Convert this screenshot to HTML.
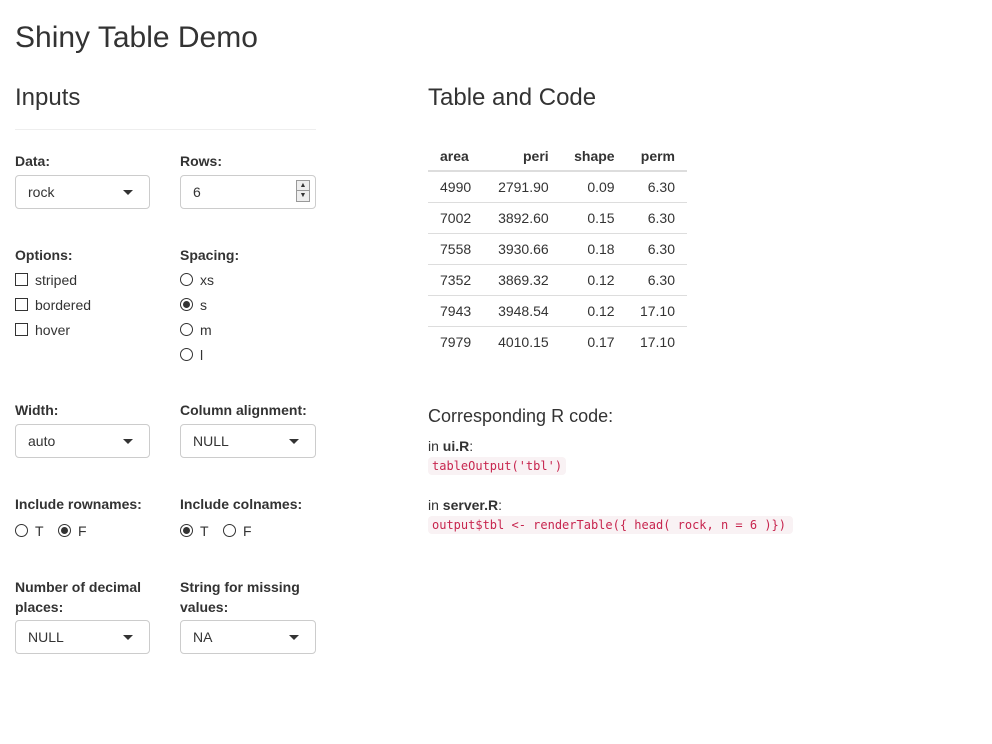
<!DOCTYPE html>
<html><head><meta charset="utf-8"><style>
*{box-sizing:border-box}
body{margin:0;width:992px;height:744px;background:#fff;font-family:"Liberation Sans",Arial,sans-serif;font-size:14px;color:#333;position:relative;overflow:hidden}
.a{position:absolute;white-space:nowrap}
h1{position:absolute;margin:0;font-weight:normal;font-size:30px;left:15px;top:21px}
h3{position:absolute;margin:0;font-weight:normal;font-size:24px}
b,.lb{font-weight:bold}
.sel{position:absolute;width:135px;height:34px;border:1px solid #ccc;border-radius:4px;padding:8px 12px;font-size:14px}
.sel:after{content:"";position:absolute;right:16px;top:14px;border-left:5px solid transparent;border-right:5px solid transparent;border-top:5px solid #333}
.cb{position:absolute;width:13px;height:13px;border:1px solid #333;background:#fff}
.rd{position:absolute;width:13px;height:13px;border:1px solid #333;border-radius:50%}
.rd.on:after{content:"";position:absolute;left:2px;top:2px;width:7px;height:7px;border-radius:50%;background:#333}
table{position:absolute;left:428px;top:140px;border-collapse:collapse;font-size:14px;width:259px}
th{text-align:right;padding:8px 12px 6px 12px;border-bottom:2px solid #ddd;font-weight:bold}
td{text-align:right;padding:7px 12px 7px 12px;border-top:1px solid #ddd;height:31px}
th:first-child,td:first-child{text-align:left}
tr:first-child td{border-top:none}
code{position:absolute;font-family:"DejaVu Sans Mono","Liberation Mono",monospace;font-size:12px;color:#c7254e;background:#f9f2f4;border-radius:4px;padding:2px 4px}
</style></head><body>
<h1>Shiny Table Demo</h1>
<h3 style="left:15px;top:84px">Inputs</h3>
<div class="a" style="left:15px;top:129px;width:301px;border-top:1px solid #eee"></div>

<div class="a lb" style="left:15px;top:153px">Data:</div>
<div class="sel" style="left:15px;top:175px">rock</div>
<div class="a lb" style="left:180px;top:153px">Rows:</div>
<div class="a" style="left:180px;top:175px;width:136px;height:34px;border:1px solid #ccc;border-radius:4px;padding:8px 12px">6</div>
<div class="a" style="left:296px;top:180px;width:14px;height:22px;border:1px solid #999;background:#eee"><div style="border-bottom:1px solid #999;height:10px;font-size:7px;line-height:10px;text-align:center">▲</div><div style="font-size:7px;line-height:10px;text-align:center">▼</div></div>

<div class="a lb" style="left:15px;top:247px">Options:</div>
<div class="cb" style="left:15px;top:273px"></div><div class="a" style="left:35px;top:272px">striped</div>
<div class="cb" style="left:15px;top:298px"></div><div class="a" style="left:35px;top:297px">bordered</div>
<div class="cb" style="left:15px;top:323px"></div><div class="a" style="left:35px;top:322px">hover</div>

<div class="a lb" style="left:180px;top:247px">Spacing:</div>
<div class="rd" style="left:180px;top:273px"></div><div class="a" style="left:200px;top:272px">xs</div>
<div class="rd on" style="left:180px;top:298px"></div><div class="a" style="left:200px;top:297px">s</div>
<div class="rd" style="left:180px;top:323px"></div><div class="a" style="left:200px;top:322px">m</div>
<div class="rd" style="left:180px;top:348px"></div><div class="a" style="left:200px;top:347px">l</div>

<div class="a lb" style="left:15px;top:402px">Width:</div>
<div class="sel" style="left:15px;top:424px">auto</div>
<div class="a lb" style="left:180px;top:402px">Column alignment:</div>
<div class="sel" style="left:180px;top:424px;width:136px">NULL</div>

<div class="a lb" style="left:15px;top:496px">Include rownames:</div>
<div class="rd" style="left:15px;top:524px"></div><div class="a" style="left:35px;top:523px">T</div>
<div class="rd on" style="left:58px;top:524px"></div><div class="a" style="left:78px;top:523px">F</div>
<div class="a lb" style="left:180px;top:496px">Include colnames:</div>
<div class="rd on" style="left:180px;top:524px"></div><div class="a" style="left:200px;top:523px">T</div>
<div class="rd" style="left:223px;top:524px"></div><div class="a" style="left:243px;top:523px">F</div>

<div class="a lb" style="left:15px;top:577px;line-height:20px">Number of decimal<br>places:</div>
<div class="sel" style="left:15px;top:620px">NULL</div>
<div class="a lb" style="left:180px;top:577px;line-height:20px">String for missing<br>values:</div>
<div class="sel" style="left:180px;top:620px;width:136px">NA</div>

<h3 style="left:428px;top:84px">Table and Code</h3>
<table>
<tr><th>area</th><th>peri</th><th>shape</th><th>perm</th></tr>
<tr><td>4990</td><td>2791.90</td><td>0.09</td><td>6.30</td></tr>
<tr><td>7002</td><td>3892.60</td><td>0.15</td><td>6.30</td></tr>
<tr><td>7558</td><td>3930.66</td><td>0.18</td><td>6.30</td></tr>
<tr><td>7352</td><td>3869.32</td><td>0.12</td><td>6.30</td></tr>
<tr><td>7943</td><td>3948.54</td><td>0.12</td><td>17.10</td></tr>
<tr><td>7979</td><td>4010.15</td><td>0.17</td><td>17.10</td></tr>
</table>

<div class="a" style="left:428px;top:406px;font-size:18px">Corresponding R code:</div>
<div class="a" style="left:428px;top:438px">in <b>ui.R</b>:</div>
<code style="left:428px;top:457px">tableOutput('tbl')</code>
<div class="a" style="left:428px;top:497px">in <b>server.R</b>:</div>
<code style="left:428px;top:516px;width:365px">output$tbl &lt;- renderTable({ head( rock, n = 6 )})</code>
</body></html>
